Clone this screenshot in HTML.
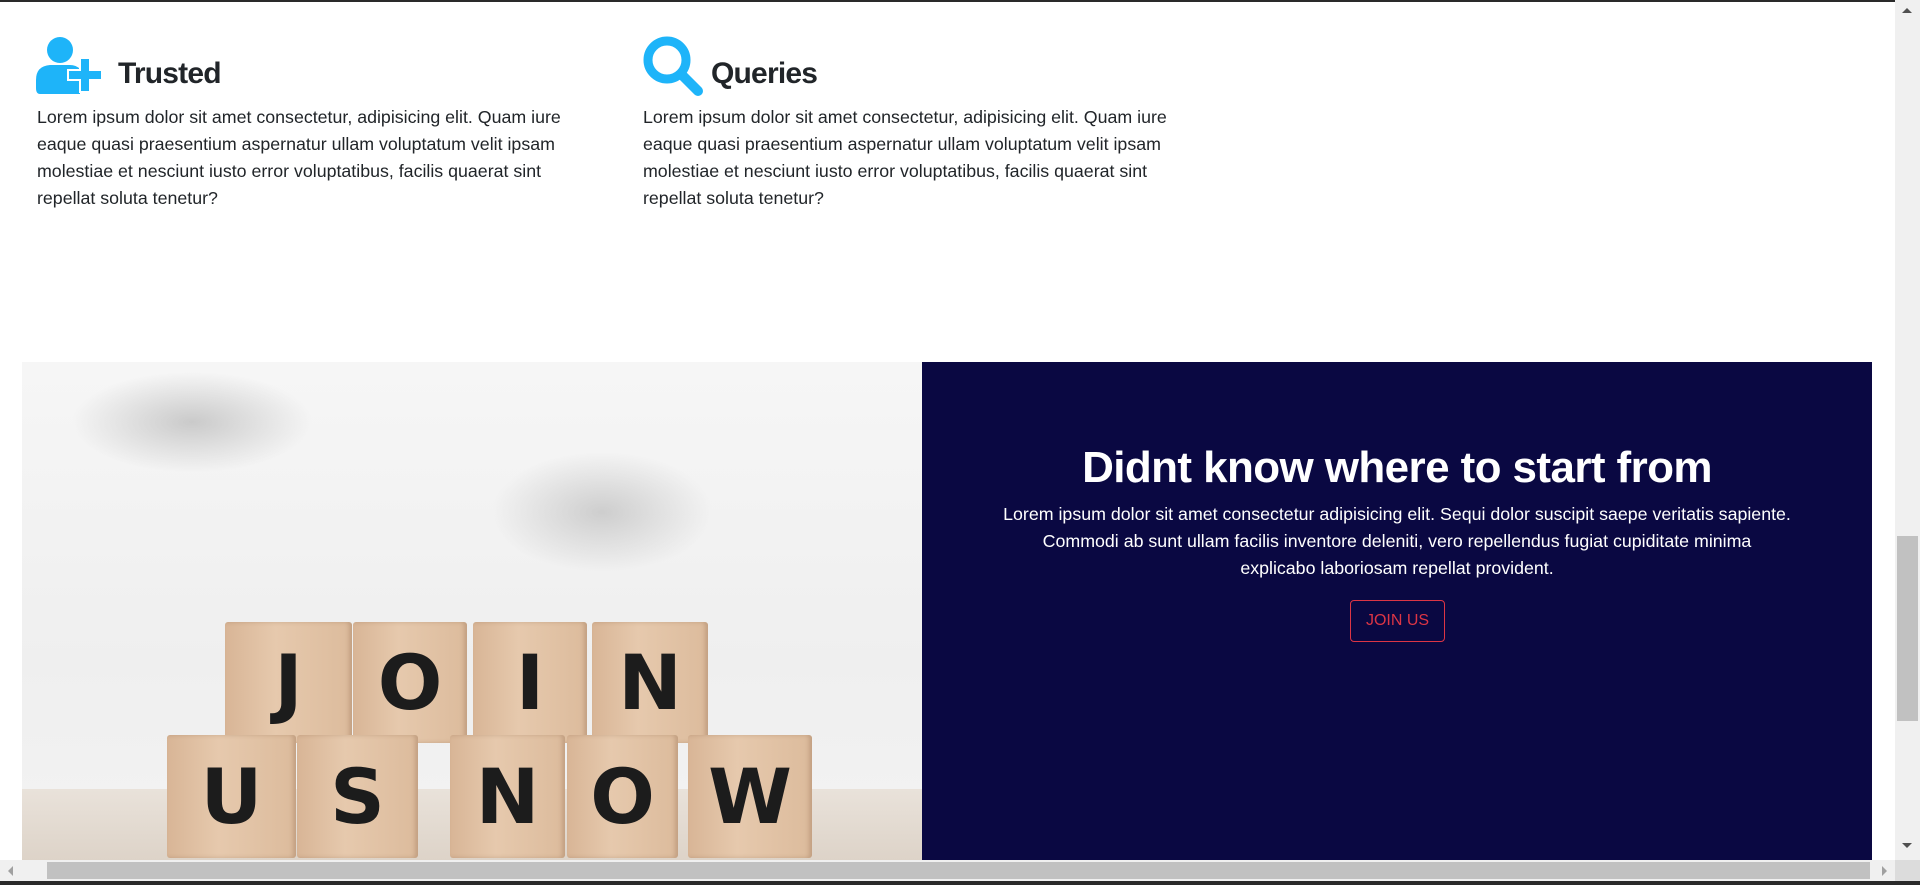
<!DOCTYPE html>
<html><head><meta charset="utf-8">
<style>
*{margin:0;padding:0;box-sizing:border-box}
html,body{width:1920px;height:885px;overflow:hidden;background:#fff;font-family:"Liberation Sans",sans-serif;color:#212529}
.abs{position:absolute}
.topline{left:0;top:0;width:1920px;height:2px;background:#2a2a2a}
h3{font-weight:bold;font-size:30px;letter-spacing:-0.8px;color:#212529}
p.t{font-size:17.8px;line-height:27px;white-space:nowrap}
.navy{left:922px;top:362px;width:950px;height:498px;background:#0a0842;color:#fff;text-align:center}
.navy h2{position:absolute;left:0;width:950px;top:81px;font-size:44px;font-weight:bold;letter-spacing:-0.6px}
.navy p{position:absolute;left:0;width:950px;top:139px;font-size:17.8px;line-height:27px;white-space:nowrap}
.btn{position:absolute;left:428px;top:238px;width:95px;height:42px;border:1.5px solid #dc3545;border-radius:4px;color:#dc3545;font-size:16px;line-height:39px}
.img{left:22px;top:362px;width:900px;height:498px;overflow:hidden;background:radial-gradient(ellipse 120px 50px at 170px 60px,rgba(150,150,150,.45),transparent),radial-gradient(ellipse 110px 60px at 580px 150px,rgba(150,150,150,.4),transparent),linear-gradient(#f6f6f6,#efefef 60%,#f3f3f3)}
.table{position:absolute;left:0;top:427px;width:900px;height:72px;background:linear-gradient(#e9e2da,#ddd3c8)}
.blk{position:absolute;background:linear-gradient(90deg,#d8b596,#e6c9ad 40%,#dcbb9c);border-radius:3px;box-shadow:inset -3px 0 4px rgba(120,80,50,.25);color:#1c1c1c;font-weight:bold;font-size:76px;text-align:center;font-family:"DejaVu Sans","Liberation Sans",sans-serif}
.vs{left:1895px;top:0;width:25px;height:860px;background:#f0f0f0}
.hs{left:0;top:860px;width:1895px;height:21px;background:#f0f0f0}
</style></head><body>
<div class="abs topline"></div>

<svg class="abs" style="left:36px;top:36px" width="74" height="58" viewBox="0 0 74 58">
<circle cx="24" cy="14" r="13" fill="#1eb4f9"/>
<path d="M4 58 Q0 58 0 52 L0 44 Q0 30 14 29 L34 29 Q40 29 44 33 L36 33 L36 45 L44 45 L44 58 Z" fill="#1eb4f9"/>
<path d="M44 22 L54 22 L54 34 L66 34 L66 44 L54 44 L54 56 L44 56 L44 44 L32 44 L32 34 L44 34 Z" fill="#1eb4f9" stroke="#fff" stroke-width="2"/>
</svg>
<h3 class="abs" style="left:118px;top:57px">Trusted</h3>
<p class="abs t" style="left:37px;top:104px">Lorem ipsum dolor sit amet consectetur, adipisicing elit. Quam iure<br>eaque quasi praesentium aspernatur ullam voluptatum velit ipsam<br>molestiae et nesciunt iusto error voluptatibus, facilis quaerat sint<br>repellat soluta tenetur?</p>

<svg class="abs" style="left:643px;top:36px" width="62" height="60" viewBox="0 0 62 60">
<circle cx="24" cy="24" r="19" fill="none" stroke="#1eb4f9" stroke-width="9"/>
<line x1="38" y1="38" x2="55" y2="55" stroke="#1eb4f9" stroke-width="10" stroke-linecap="round"/>
</svg>
<h3 class="abs" style="left:711px;top:57px">Queries</h3>
<p class="abs t" style="left:643px;top:104px">Lorem ipsum dolor sit amet consectetur, adipisicing elit. Quam iure<br>eaque quasi praesentium aspernatur ullam voluptatum velit ipsam<br>molestiae et nesciunt iusto error voluptatibus, facilis quaerat sint<br>repellat soluta tenetur?</p>

<div class="abs img">
<div class="table"></div>
<div class="blk" style="left:203px;top:260px;width:127px;height:121px;line-height:121px">J</div>
<div class="blk" style="left:331px;top:260px;width:114px;height:121px;line-height:121px">O</div>
<div class="blk" style="left:451px;top:260px;width:114px;height:121px;line-height:121px">I</div>
<div class="blk" style="left:570px;top:260px;width:116px;height:121px;line-height:121px">N</div>
<div class="blk" style="left:145px;top:373px;width:129px;height:123px;line-height:123px">U</div>
<div class="blk" style="left:275px;top:373px;width:121px;height:123px;line-height:123px">S</div>
<div class="blk" style="left:428px;top:373px;width:115px;height:123px;line-height:123px">N</div>
<div class="blk" style="left:545px;top:373px;width:111px;height:123px;line-height:123px">O</div>
<div class="blk" style="left:666px;top:373px;width:124px;height:123px;line-height:123px">W</div>
</div>

<div class="abs navy">
<h2>Didnt know where to start from</h2>
<p>Lorem ipsum dolor sit amet consectetur adipisicing elit. Sequi dolor suscipit saepe veritatis sapiente.<br>Commodi ab sunt ullam facilis inventore deleniti, vero repellendus fugiat cupiditate minima<br>explicabo laboriosam repellat provident.</p>
<div class="btn">JOIN US</div>
</div>

<div class="abs vs">
<div class="abs" style="left:7px;top:8px;width:0;height:0;border-left:5px solid transparent;border-right:5px solid transparent;border-bottom:5px solid #505050"></div>
<div class="abs" style="left:2px;top:536px;width:21px;height:185px;background:#c1c1c1"></div>
<div class="abs" style="left:7px;top:843px;width:0;height:0;border-left:5px solid transparent;border-right:5px solid transparent;border-top:5px solid #505050"></div>
</div>
<div class="abs hs">
<div class="abs" style="left:8px;top:6px;width:0;height:0;border-top:5px solid transparent;border-bottom:5px solid transparent;border-right:5px solid #a0a0a0"></div>
<div class="abs" style="left:47px;top:2px;width:1823px;height:17px;background:#c1c1c1"></div>
<div class="abs" style="left:1882px;top:6px;width:0;height:0;border-top:5px solid transparent;border-bottom:5px solid transparent;border-left:5px solid #a0a0a0"></div>
</div>
<div class="abs" style="left:1895px;top:860px;width:25px;height:21px;background:#dcdcdc"></div>
<div class="abs" style="left:0;top:881px;width:1920px;height:4px;background:#2a2a2a"></div>
</body></html>
